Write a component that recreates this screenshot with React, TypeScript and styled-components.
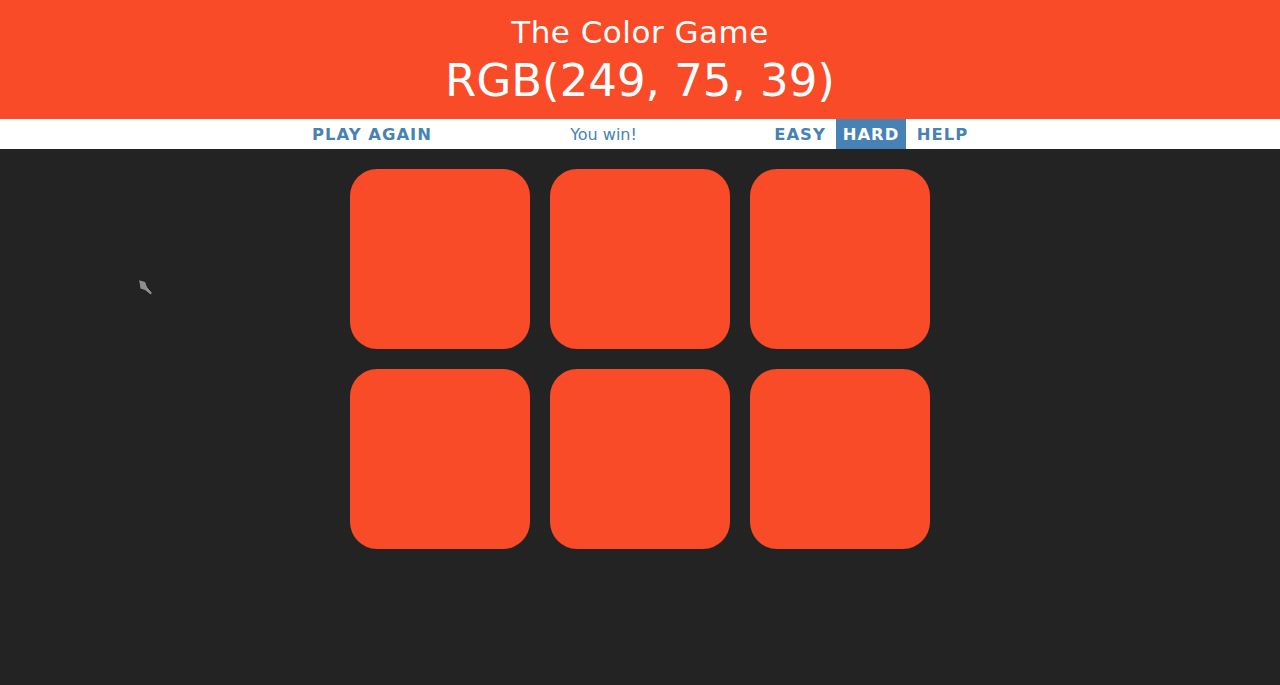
import React from "react";
import styled, { createGlobalStyle } from "styled-components";

const GOAL = "rgb(249, 75, 39)";

const Global = createGlobalStyle`
  html, body { margin: 0; padding: 0; background: #232323; }
  body { font-family: "DejaVu Sans", "Open Sans", sans-serif; }
`;

const Page = styled.div`
  position: relative;
  min-height: 685px;
  background: #232323;
`;

const Header = styled.header<{ $bg: string }>`
  background: ${(p) => p.$bg};
  height: 119px;
  display: flex;
  flex-direction: column;
  align-items: center;
  justify-content: flex-start;
  color: #fff;
  font-weight: normal;
`;

const Title = styled.div`
  font-size: 31px;
  line-height: 34px;
  margin-top: 15px;
  letter-spacing: 0.5px;
`;

const ColorDisplay = styled.div`
  font-size: 45px;
  line-height: 52px;
  margin-top: 6px;
`;

const Stripe = styled.nav`
  background: #fff;
  height: 30px;
  display: flex;
  justify-content: center;
  align-items: stretch;
  gap: 4px;
`;

const NavButton = styled.button<{ $selected?: boolean; $w: number }>`
  border: none;
  outline: none;
  margin: 0;
  padding: 0;
  width: ${(p) => p.$w}px;
  height: 30px;
  font-family: inherit;
  font-size: 16.4px;
  font-weight: bold;
  letter-spacing: 1px;
  text-transform: uppercase;
  background: ${(p) => (p.$selected ? "steelblue" : "transparent")};
  color: ${(p) => (p.$selected ? "#fff" : "steelblue")};
  cursor: pointer;
`;

const Message = styled.span`
  width: 321px;
  display: flex;
  align-items: center;
  justify-content: center;
  color: steelblue;
  font-size: 16px;
`;

const Board = styled.div`
  width: 600px;
  margin: 10px auto 0;
  display: flex;
  flex-wrap: wrap;
`;

const Square = styled.div<{ $bg: string }>`
  width: 180px;
  height: 180px;
  margin: 10px;
  border-radius: 27px;
  background: ${(p) => p.$bg};
`;

const Cursor = styled.svg`
  position: absolute;
  left: 137px;
  top: 278px;
`;

export default function App() {
  const squares = Array.from({ length: 6 }, () => GOAL);
  return (
    <Page>
      <Global />
      <Header $bg={GOAL}>
        <Title>The Color Game</Title>
        <ColorDisplay>RGB(249, 75, 39)</ColorDisplay>
      </Header>
      <Stripe>
        <NavButton $w={134}>Play Again</NavButton>
        <Message>You win!</Message>
        <NavButton $w={64}>Easy</NavButton>
        <NavButton $w={70} $selected>
          Hard
        </NavButton>
        <NavButton $w={65}>Help</NavButton>
      </Stripe>
      <Board>
        {squares.map((c, i) => (
          <Square key={i} $bg={c} />
        ))}
      </Board>
      <Cursor width="18" height="20" viewBox="0 0 18 20">
        <path
          d="M1.5 1.5 L8.5 3.5 L10.5 9 L15.5 15 L13.5 17 L8 12.5 L3 11 Z"
          fill="#8e8e8e"
          stroke="#1a1a1a"
          strokeWidth="1"
          strokeLinejoin="round"
        />
      </Cursor>
    </Page>
  );
}
